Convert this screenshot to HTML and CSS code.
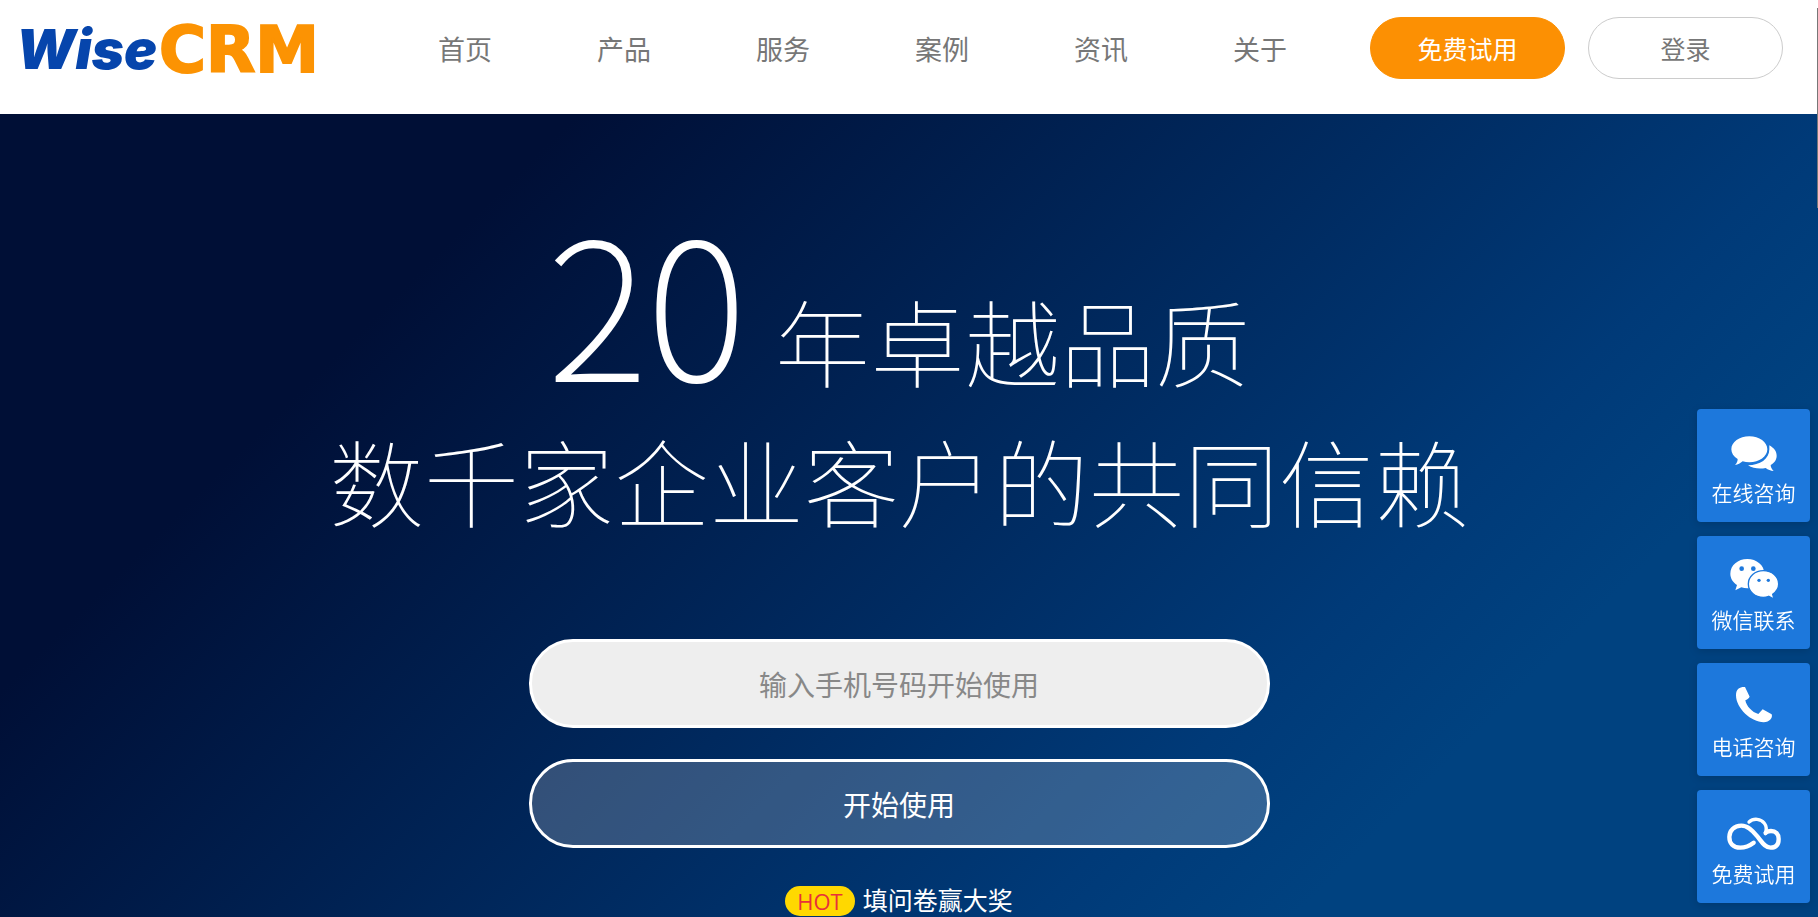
FILE: index.html
```html
<!DOCTYPE html>
<html lang="zh-CN">
<head>
    <meta charset="UTF-8" />
    <meta name="viewport" content="width=device-width, initial-scale=1.0" />
    <title>WiseCRM</title>
    <link rel="stylesheet" href="styles.css">
</head>
<body>
    <header class="header">
        <a class="logo" href="#" aria-label="WiseCRM">
            <svg width="340" height="110" viewBox="0 0 340 110">
                <text class="logo-wise" x="0" y="69">Wise</text>
                <text class="logo-crm" x="143" y="72">CRM</text>
            </svg>
        </a>
        <nav class="nav">
            <a href="#">首页</a>
            <a href="#">产品</a>
            <a href="#">服务</a>
            <a href="#">案例</a>
            <a href="#">资讯</a>
            <a href="#">关于</a>
        </nav>
        <div class="actions">
            <button class="btn btn-trial" type="button">免费试用</button>
            <button class="btn btn-login" type="button">登录</button>
        </div>
    </header>

    <main class="hero">
        <h1 class="title"><span class="years">20</span> 年卓越品质<br>数千家企业客户的共同信赖</h1>
        <form class="signup">
            <input class="field phone" type="tel" placeholder="输入手机号码开始使用" aria-label="输入手机号码开始使用">
            <button class="field start" type="button">开始使用</button>
        </form>
        <a class="survey" href="#"><span class="hot">HOT</span>填问卷赢大奖</a>
    </main>

    <!-- Floating contact bar -->
    <aside class="side">
        <a class="side-item" href="#">
            <svg width="54" height="42" viewBox="0 0 162 126" fill="#fff">
                <path d="M67 13c30 0 54 17 54 39s-24 39-54 39c-7 0-14-1-20-3-7 6-14 10-23 11 5-5 8-11 8-18-12-7-19-17-19-29 0-22 24-39 54-39z" />
                <path d="M127 40c14 8 22 18 22 31 0 12-7 22-18 28 0 8 4 13 9 18-9 0-17-4-24-9-18 4-39 1-53-8 36 0 64-19 64-48z" />
            </svg>
            <span>在线咨询</span>
        </a>
        <a class="side-item" href="#">
            <svg width="54" height="42" viewBox="0 0 162 126">
                <path fill="#fff" d="M61 0c28 0 51 19 51 44S89 88 61 88c-6 0-12-1-18-3l-18 9 5-16C18 70 10 58 10 44 10 19 33 0 61 0z" />
                <path fill="#fff" stroke="#1d78dc" stroke-width="4" d="M109 35c-25 0-45 18-45 40s20 40 45 40c6 0 11-1 16-3l16 8-4-14c11-8 18-18 18-31 0-22-20-40-46-40z" />
                <g fill="#1d78dc">
                    <circle cx="44" cy="29" r="7" />
                    <circle cx="79" cy="29" r="7" />
                    <circle cx="96" cy="64" r="5" />
                    <circle cx="124" cy="64" r="5" />
                </g>
            </svg>
            <span>微信联系</span>
        </a>
        <a class="side-item" href="#">
            <svg width="54" height="42" viewBox="0 0 162 126" fill="#fff">
                <path d="M34 8c6-4 13-6 20-5l14 29c-3 6-8 9-13 11 3 17 20 36 39 41l13-14 27 15c4 10-6 24-24 24C73 109 27 67 27 28c0-9 2-15 7-20z" />
            </svg>
            <span>电话咨询</span>
        </a>
        <a class="side-item" href="#">
            <svg width="54" height="42" viewBox="0 0 162 126" fill="none" stroke="#fff" stroke-width="13" stroke-linecap="round">
                <path d="M80 89c-12 9-24 15-40 15C18 104 7 91 7 72s14-34 36-34c20 0 34 15 48 32s22 34 40 34c17 0 24-11 24-26s-9-24-23-24c-6 0-12 2-16 5" />
                <path stroke-width="10" d="M66 27c14-13 36-10 46 4 7 9 7 20 3 31" />
            </svg>
            <span>免费试用</span>
        </a>
    </aside>
    <div class="scroll-thumb"></div>
</body>
</html>
```

FILE: styles.css
```css
* {
    box-sizing: border-box;
}

body {
    margin: 0;
    height: 100vh;
    display: flex;
    flex-direction: column;
    overflow: hidden;
    font-family: "Noto Sans CJK SC", sans-serif;
    background: #fff;
}

a {
    color: inherit;
    text-decoration: none;
}

button, input {
    font-family: inherit;
}

.header {
    flex: none;
    display: flex;
    align-items: flex-start;
    height: 114px;
    padding: 0 35px 0 16px;
}

.logo {
    flex: 0 0 422px;
}

.logo svg {
    display: block;
}

.logo-wise {
    font: italic 900 55px Inter, sans-serif;
    fill: #0645ac;
}

.logo-crm {
    font: bold 64px "DejaVu Sans", sans-serif;
    fill: #fc9303;
    stroke: #fc9303;
    stroke-width: 2px;
}

.nav {
    display: flex;
    gap: 105px;
    padding-top: 17px;
    font-size: 27px;
    line-height: 64px;
    color: #777;
}

.actions {
    display: flex;
    gap: 23px;
    margin-left: auto;
    padding-top: 17px;
}

.btn {
    width: 195px;
    height: 62px;
    padding: 0;
    border: 1px solid #ccc;
    border-radius: 31px;
    background: #fff;
    color: #777;
    font-size: 25px;
    cursor: pointer;
}

.btn-trial {
    border-color: #fc9003;
    background: #fc9003;
    color: #fff;
}

.hero {
    flex: 1;
    min-height: 0;
    display: flex;
    flex-direction: column;
    align-items: center;
    padding: 115px 20px 0 0;
    background: linear-gradient(135deg, #000f36 22%, #003a78 70%, #004280 80%);
    color: #fff;
}

.title {
    flex: none;
    margin: 0;
    font-size: 95px;
    font-weight: 100;
    line-height: 140px;
    text-align: center;
}

.years {
    margin-right: 8px;
    font-size: 190px;
    line-height: 140px;
    -webkit-text-stroke: 2px #fff;
}

.signup {
    display: flex;
    flex-direction: column;
    gap: 31px;
    width: 741px;
    margin-top: 89px;
}

.field {
    height: 89px;
    padding: 0;
    border: 3px solid #fff;
    border-radius: 44px;
    font-size: 28px;
    text-align: center;
}

.phone {
    background: #eee;
}

.phone::placeholder {
    color: #888;
}

.start {
    background: rgba(255, 255, 255, 0.2);
    color: #fff;
    cursor: pointer;
}

.survey {
    display: flex;
    align-items: center;
    gap: 8px;
    margin-top: 32px;
    font-size: 25px;
    line-height: 38px;
}

.hot {
    margin-top: 4px;
    padding: 0 12px;
    border-radius: 15px;
    background: #ffd800;
    color: #e8303a;
    font-family: "Open Sans", sans-serif;
    font-size: 22px;
    line-height: 30px;
}

.side {
    position: fixed;
    right: 8px;
    bottom: 14px;
    display: flex;
    flex-direction: column;
    gap: 14px;
}

.side-item {
    display: flex;
    flex-direction: column;
    align-items: center;
    width: 113px;
    height: 113px;
    padding-top: 23px;
    border-radius: 4px;
    background: #1d78dc;
    box-shadow: 0 2px 8px rgba(0, 0, 0, 0.15);
    color: #fff;
    font-size: 21px;
    font-weight: 350;
    line-height: 36px;
}

.scroll-thumb {
    position: fixed;
    top: 8px;
    right: 0;
    width: 1px;
    height: 200px;
    background: #777;
}
```
